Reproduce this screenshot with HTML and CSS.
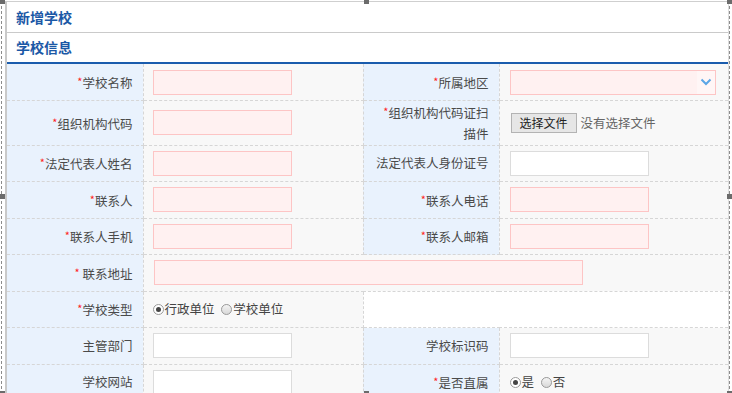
FILE: index.html
```html
<!DOCTYPE html>
<html lang="zh-CN">
<head>
    <meta charset="UTF-8">
    <meta name="viewport" content="width=device-width, initial-scale=1.0">
    <title>新增学校</title>
    <link rel="stylesheet" href="styles.css">
</head>
<body>
    <div class="frame">
        <div class="panel">
            <div class="page-title">新增学校</div>
            <div class="section-title">学校信息</div>

            <table class="form-table">
                <colgroup>
                    <col class="col-label">
                    <col class="col-field">
                    <col class="col-label">
                    <col class="col-field2">
                </colgroup>
                <tr>
                    <td class="label"><span class="req">*</span>学校名称</td>
                    <td class="field"><input type="text" class="txt must"></td>
                    <td class="label"><span class="req">*</span>所属地区</td>
                    <td class="field">
                        <div class="select must">
                            <span class="select-arrow">
                                <svg width="12" height="8" viewBox="0 0 12 8"><path d="M1.5 1.5 L6 6 L10.5 1.5" fill="none" stroke="#5ba6e6" stroke-width="2"/></svg>
                            </span>
                        </div>
                    </td>
                </tr>
                <tr class="tall">
                    <td class="label"><span class="req">*</span>组织机构代码</td>
                    <td class="field"><input type="text" class="txt must"></td>
                    <td class="label wrap"><span class="req">*</span>组织机构代码证扫描件</td>
                    <td class="field">
                        <span class="file-btn">选择文件</span><span class="file-name">没有选择文件</span>
                    </td>
                </tr>
                <tr>
                    <td class="label"><span class="req">*</span>法定代表人姓名</td>
                    <td class="field"><input type="text" class="txt must"></td>
                    <td class="label">法定代表人身份证号</td>
                    <td class="field"><input type="text" class="txt"></td>
                </tr>
                <tr>
                    <td class="label"><span class="req">*</span>联系人</td>
                    <td class="field"><input type="text" class="txt must"></td>
                    <td class="label"><span class="req">*</span>联系人电话</td>
                    <td class="field"><input type="text" class="txt must"></td>
                </tr>
                <tr>
                    <td class="label"><span class="req">*</span>联系人手机</td>
                    <td class="field"><input type="text" class="txt must"></td>
                    <td class="label"><span class="req">*</span>联系人邮箱</td>
                    <td class="field"><input type="text" class="txt must"></td>
                </tr>
                <tr>
                    <td class="label"><span class="req">*</span> 联系地址</td>
                    <td class="field" colspan="3"><input type="text" class="txt must wide"></td>
                </tr>
                <tr>
                    <td class="label"><span class="req">*</span>学校类型</td>
                    <td class="field">
                        <label class="radio"><span class="dot checked"></span>行政单位</label>
                        <label class="radio"><span class="dot"></span>学校单位</label>
                    </td>
                    <td class="blank" colspan="2"></td>
                </tr>
                <tr>
                    <td class="label">主管部门</td>
                    <td class="field"><input type="text" class="txt"></td>
                    <td class="label">学校标识码</td>
                    <td class="field"><input type="text" class="txt"></td>
                </tr>
                <tr>
                    <td class="label">学校网站</td>
                    <td class="field"><input type="text" class="txt"></td>
                    <td class="label"><span class="req">*</span>是否直属</td>
                    <td class="field">
                        <label class="radio"><span class="dot checked"></span>是</label>
                        <label class="radio"><span class="dot"></span>否</label>
                    </td>
                </tr>
            </table>
        </div>

        <!-- editor resize handles -->
        <span class="handle h-tl"></span>
        <span class="handle h-tm"></span>
        <span class="handle h-tr"></span>
        <span class="handle h-ml"></span>
        <span class="handle h-mr"></span>
        <span class="handle h-bl"></span>
        <span class="handle h-bm"></span>
        <span class="handle h-br"></span>
    </div>
</body>
</html>
```

FILE: styles.css
```css
html, body {
    margin: 0;
    padding: 0;
    height: 393px;
    overflow: hidden;
    background: #fff;
    font-family: "Noto Sans CJK SC", "Noto Sans", sans-serif;
    font-size: 12.5px;
    color: #4a4a4a;
}

.frame {
    position: relative;
    margin-left: 1px;
    width: 727px;
    height: 393px;
    border-left: 1px dashed #8c8c8c;
    border-right: 1px dashed #8c8c8c;
}

.panel {
    margin-left: 3px;
    width: 721px;
    border-left: 2px solid #c9c9c9;
    border-right: 1px solid #ddd;
    border-top: 1px solid #cfcfcf;
    margin-top: 1px;
}

.page-title {
    height: 30px;
    line-height: 30px;
    padding-left: 9px;
    font-size: 14px;
    font-weight: bold;
    color: #1b58a6;
    border-bottom: 1px solid #cacaca;
}

.section-title {
    height: 29px;
    line-height: 29px;
    padding-left: 9px;
    font-size: 14px;
    font-weight: bold;
    color: #1b58a6;
    border-bottom: 2px solid #1a5cad;
}

.form-table {
    width: 721px;
    border-collapse: collapse;
    table-layout: fixed;
}

.col-label {
    width: 136px;
}

.col-field {
    width: 220px;
}

.col-field2 {
    width: 229px;
}

.form-table td {
    height: 36.5px;
    padding: 0 10px;
    border: 1px dashed #d6d6d6;
    box-sizing: border-box;
    line-height: 18px;
}

.form-table tr:first-child td {
    border-top: none;
}

.form-table td:first-child {
    border-left: none;
}

.form-table td:last-child {
    border-right: none;
}

.form-table tr.tall td {
    height: 44.5px;
}

.form-table td.field {
    padding-left: 9px;
}

.form-table td.field:last-child {
    padding-left: 10px;
}

.label {
    background-color: #e9f2fd;
    text-align: right;
    white-space: nowrap;
}

.form-table td.label.wrap {
    white-space: normal;
    line-height: 21px;
    padding-left: 14px;
}

.field {
    background-color: #f8f8f8;
}

.blank {
    background-color: #fff;
}

.req {
    color: #f22;
    font-size: 11px;
    vertical-align: 2px;
}

.txt {
    display: block;
    width: 139px;
    height: 25px;
    margin: 0;
    padding: 0 4px;
    box-sizing: border-box;
    border: 1px solid #dcdcdc;
    background-color: #fff;
    font-family: inherit;
    font-size: 12px;
}

.txt.must {
    border-color: #fdc5c5;
    background-color: #fff1f1;
}

.txt.wide {
    width: 429px;
}

.select {
    position: relative;
    width: 206px;
    height: 25px;
    box-sizing: border-box;
    border: 1px solid #fdc5c5;
    background-color: #fff1f1;
}

.select-arrow {
    position: absolute;
    right: 0;
    top: 0;
    width: 18px;
    height: 23px;
    background-color: #fff6f6;
    display: flex;
    align-items: center;
    justify-content: center;
}

.file-btn {
    display: inline-block;
    height: 20px;
    line-height: 18px;
    padding: 0 8px;
    box-sizing: border-box;
    border: 1px solid #b3b3b3;
    background-color: #e6e6e6;
    color: #222;
    margin-left: 1px;
    font-size: 12px;
    vertical-align: middle;
}

.file-name {
    margin-left: 4px;
    color: #666;
    vertical-align: middle;
}

.radio {
    display: inline-flex;
    align-items: center;
    color: #444;
    margin-right: 4px;
}

.dot {
    display: inline-block;
    width: 11px;
    height: 11px;
    box-sizing: border-box;
    border: 1px solid #9a9a9a;
    border-radius: 50%;
    background: linear-gradient(#f4f4f4, #d8d8d8);
    margin-right: 1px;
    position: relative;
}

.dot.checked {
    background: #fff;
}

.dot.checked::after {
    content: "";
    position: absolute;
    left: 2px;
    top: 2px;
    width: 5px;
    height: 5px;
    border-radius: 50%;
    background-color: #444;
}

.handle {
    position: absolute;
    width: 5px;
    height: 5px;
    background-color: #6b6b6b;
}

.h-tl { left: -2px; top: -2px; }
.h-tm { left: 362px; top: -2px; }
.h-tr { right: -3px; top: -2px; }
.h-ml { left: -2px; top: 193px; }
.h-mr { right: -3px; top: 193px; }
.h-bl { left: -2px; bottom: -2px; }
.h-bm { left: 362px; bottom: -2px; }
.h-br { right: -3px; bottom: -2px; }
```
